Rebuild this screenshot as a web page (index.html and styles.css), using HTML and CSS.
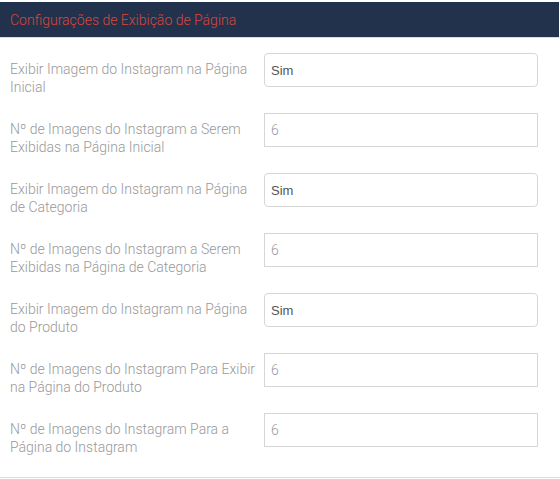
FILE: index.html
```html
<!DOCTYPE html>
<html lang="pt">
<head>
<meta charset="utf-8">
<title>Configurações de Exibição de Página</title>
<link rel="stylesheet" href="styles.css">
</head>
<body>
<div class="panel">
  <div class="panel-heading">Configurações de Exibição de Página</div>
  <div class="panel-body">
    <div class="row">
      <label class="label">Exibir Imagem do Instagram na Página Inicial</label>
      <select class="select"><option>Sim</option></select>
    </div>
    <div class="row">
      <label class="label">Nº de Imagens do Instagram a Serem Exibidas na Página Inicial</label>
      <input class="input" type="text" value="6">
    </div>
    <div class="row">
      <label class="label">Exibir Imagem do Instagram na Página de Categoria</label>
      <select class="select"><option>Sim</option></select>
    </div>
    <div class="row">
      <label class="label">Nº de Imagens do Instagram a Serem Exibidas na Página de Categoria</label>
      <input class="input" type="text" value="6">
    </div>
    <div class="row">
      <label class="label">Exibir Imagem do Instagram na Página do Produto</label>
      <select class="select"><option>Sim</option></select>
    </div>
    <div class="row">
      <label class="label">Nº de Imagens do Instagram Para Exibir na Página do Produto</label>
      <input class="input" type="text" value="6">
    </div>
    <div class="row">
      <label class="label">Nº de Imagens do Instagram Para a Página do Instagram</label>
      <input class="input" type="text" value="6">
    </div>
  </div>
</div>
</body>
</html>
```
FILE: styles.css
```css
html, body {
  margin: 0;
  padding: 0;
  background: #fff;
}
body {
  font-family: Roboto, "Liberation Sans", sans-serif;
  width: 560px;
}
.panel {
  margin-top: 2px;
  border-bottom: 1px solid #dcdcdc;
}
.panel-heading {
  background: #22324d;
  color: #d8463b;
  height: 35px;
  margin-right: 1px;
  padding: 0 10px;
  display: flex;
  align-items: center;
  font-size: 14px;
  font-weight: 300;
  border-bottom: 1px solid #dcdcdc;
}
.panel-body {
  padding: 15px 22px 21px 10px;
  display: flex;
  flex-direction: column;
  gap: 17px;
}
.row {
  display: grid;
  grid-template-columns: 254px 1fr;
  align-items: start;
}
.label {
  padding-top: 7px;
  font-size: 14px;
  font-weight: 300;
  line-height: 18px;
  color: #999;
}
.select, .input {
  box-sizing: border-box;
  height: 34px;
  width: 100%;
  margin: 0;
  border: 1px solid #d6d6d6;
  background: #fff;
  padding: 0 6px;
  outline: none;
}
.select {
  appearance: none;
  -webkit-appearance: none;
  border-radius: 4px;
  font-family: "Liberation Sans", Arial, sans-serif;
  font-size: 13px;
  color: #555;
}
.input {
  border-radius: 0;
  font-family: Roboto, "Liberation Sans", sans-serif;
  font-size: 14px;
  font-weight: 300;
  color: #999;
}
```
